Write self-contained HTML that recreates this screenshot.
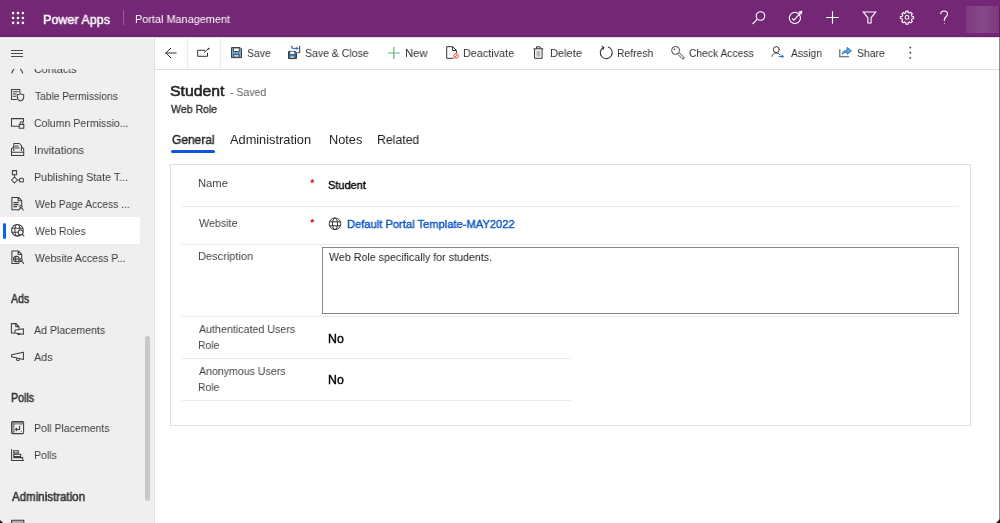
<!DOCTYPE html>
<html><head><meta charset="utf-8">
<style>
*{box-sizing:border-box;margin:0;padding:0}
html,body{width:1000px;height:523px;overflow:hidden;background:#fff;font-family:"Liberation Sans",sans-serif;color:#323130}
.a{position:absolute}
.t{position:absolute;white-space:nowrap;font-family:"Liberation Sans",sans-serif;will-change:transform}
svg{position:absolute;overflow:visible}
</style></head><body>
<!-- top bar -->
<div class="a" style="left:0;top:0;width:1000px;height:37px;background:#742774"></div>
<div class="a" style="left:0;top:36px;width:1000px;height:1px;background:#6a1f6a"></div>
<div class="a" style="left:0;top:37px;width:1000px;height:1px;background:#e9dde9"></div>
<!-- waffle -->
<svg style="left:0;top:0" width="40" height="37" fill="#fff"><circle cx="13.1" cy="13.1" r="1.3"/><circle cx="18" cy="13.1" r="1.3"/><circle cx="22.9" cy="13.1" r="1.3"/><circle cx="13.1" cy="18" r="1.3"/><circle cx="18" cy="18" r="1.3"/><circle cx="22.9" cy="18" r="1.3"/><circle cx="13.1" cy="22.9" r="1.3"/><circle cx="18" cy="22.9" r="1.3"/><circle cx="22.9" cy="22.9" r="1.3"/></svg>
<div class="a" style="left:123px;top:10px;width:1px;height:15px;background:#9a5c9a"></div>
<!-- top right icons -->
<svg style="left:0;top:0" width="1000" height="37" fill="none" stroke="#fff" stroke-width="1.1">
<circle cx="760.5" cy="16" r="4.3"/><path d="M757.4 19.2L752.6 24"/>
<circle cx="794.9" cy="18" r="5.6"/><path d="M792 18.3l1.9 1.9 6.6-7.4"/><path d="M802.6 10.6l-4.3 1.2 3.1 3.1z" fill="#fff" stroke="none"/>
<path d="M832.5 11.2v12.6M826.2 17.5h12.6"/>
<path d="M863.3 12h12.4l-4.6 5.8v5.2h-3.2v-5.2z"/>
<circle cx="907" cy="17.4" r="1.9"/>
<path d="M905.6 11.4l.3 1.6-1.3.6-1.1-1.1-1.6 1.3.8 1.4-.7 1.3-1.6.1v2l1.6.2.6 1.3-.9 1.3 1.5 1.5 1.3-.9 1.3.6.2 1.6h2l.2-1.6 1.3-.6 1.3.9 1.5-1.5-.9-1.3.6-1.3 1.6-.2v-2l-1.6-.2-.6-1.3.9-1.3-1.5-1.5-1.3.9-1.3-.6-.2-1.6z"/>
<path d="M940.7 14.2c0-2 1.5-3.2 3.4-3.2s3.4 1.2 3.4 3.1c0 2.6-3.2 2.8-3.2 5.8v1.2"/><circle cx="944.3" cy="23.4" r=".5" fill="#fff" stroke="none"/>
</svg>
<div class="a" style="left:966px;top:6px;width:34px;height:27px;background:linear-gradient(90deg,#7e3a7e,#87498a 50%,#7d377d)"></div>

<!-- sidebar -->
<div class="a" style="left:0;top:38px;width:154px;height:485px;background:#efefef;border-top:1px solid #f6f8f6"></div>
<div class="a" style="left:154px;top:38px;width:1px;height:485px;background:#e0e0e0"></div>
<div class="a" style="left:0;top:217px;width:140px;height:27px;background:#fff"></div>
<div class="a" style="left:3px;top:222.5px;width:3px;height:16px;border-radius:1.5px;background:#0a5efc"></div>
<div class="a" style="left:145px;top:336px;width:5px;height:165px;border-radius:3px;background:#c8c8c8"></div>
<!-- hamburger -->
<div class="a" style="left:11px;top:50.1px;width:12px;height:1.1px;background:#4a4a4a"></div>
<div class="a" style="left:11px;top:53.2px;width:12px;height:1.1px;background:#4a4a4a"></div>
<div class="a" style="left:11px;top:56.3px;width:12px;height:1.1px;background:#4a4a4a"></div>

<!-- toolbar -->
<div class="a" style="left:155px;top:69px;width:845px;height:1px;background:#e1dfdd"></div>
<div class="a" style="left:187px;top:37px;width:1px;height:32px;background:#edebe9"></div>
<div class="a" style="left:220px;top:37px;width:1px;height:32px;background:#edebe9"></div>

<!-- card -->
<div class="a" style="left:170px;top:164px;width:801px;height:262px;border:1px solid #e1dfdd"></div>
<div class="a" style="left:182px;top:206px;width:777px;height:1px;background:#edebe9"></div>
<div class="a" style="left:182px;top:244px;width:777px;height:1px;background:#edebe9"></div>
<div class="a" style="left:322px;top:247px;width:637px;height:67px;border:1px solid #8a8886"></div>
<div class="a" style="left:182px;top:316px;width:777px;height:1px;background:#edebe9"></div>
<div class="a" style="left:182px;top:358px;width:389px;height:1px;background:#edebe9"></div>
<div class="a" style="left:182px;top:400px;width:389px;height:1px;background:#edebe9"></div>
<!-- tab underline -->
<div class="a" style="left:171px;top:150px;width:43.5px;height:3px;border-radius:1.5px;background:#0b55e0"></div>
<!-- asterisks -->
<svg style="left:0;top:0" width="1" height="1" fill="#e0282e"><path transform="translate(312.3 181.2)" d="M0 -2.6L.75 -.9 2.5 -.85 1.2 .35 1.55 2.1 0 1.2 -1.55 2.1 -1.2 .35 -2.5 -.85 -.75 -.9z"/><path transform="translate(312.3 220.8)" d="M0 -2.6L.75 -.9 2.5 -.85 1.2 .35 1.55 2.1 0 1.2 -1.55 2.1 -1.2 .35 -2.5 -.85 -.75 -.9z"/></svg>
<!-- globe -->
<svg style="left:0;top:0" width="1" height="1" fill="none" stroke="#323130" stroke-width="1">
<circle cx="335" cy="223.8" r="5.8"/><ellipse cx="335" cy="223.8" rx="2.5" ry="5.8"/><path d="M329.7 221.8h10.6M329.7 225.8h10.6"/>
</svg>
<!-- right edge -->
<div class="a" style="left:999px;top:6px;width:1px;height:31px;background:#5f1f5f"></div>
<div class="a" style="left:999px;top:37px;width:1px;height:486px;background:#8c8c8c"></div>
<div class="a" style="left:996px;top:519px;width:4px;height:4px;background:#111;clip-path:polygon(100% 0,100% 100%,0 100%)"></div>

<div class="a" style="left:0;top:520px;width:3px;height:3px;background:#111;clip-path:polygon(0 0,100% 100%,0 100%)"></div>
<!-- toolbar icons -->
<svg style="left:0;top:0" width="1" height="1" fill="none" stroke="#323130" stroke-width="1" stroke-linecap="round" stroke-linejoin="round">
<path d="M165.8 53h10.4M170.8 48.2l-4.9 4.8 4.9 4.8"/>
<path d="M204.6 50.3h-6.9v6h9.8v-3.1M204.2 52.4l4.3-3.8"/><circle cx="208.7" cy="48.7" r=".9" fill="#323130" stroke="none"/>
</svg>
<!-- save floppy -->
<svg style="left:0;top:0" width="1" height="1">
<path d="M231.5 47.6h8.6l1.4 1.4v8.6h-10z" fill="#6fa8dc" stroke="#3d3d3d" stroke-width="1"/>
<rect x="233.6" y="48" width="5.6" height="3.4" fill="#fff" stroke="#323130" stroke-width=".8"/>
<rect x="233.8" y="54.2" width="5.2" height="3" fill="#b8d4ee" stroke="#323130" stroke-width=".8"/>
</svg>
<!-- save & close -->
<svg style="left:0;top:0" width="1" height="1">
<path d="M288.6 51.4h6.6l1.2 1.2v6h-7.8z" fill="#3d6a8e" stroke="#323130" stroke-width="1"/>
<rect x="290.3" y="51.6" width="4" height="2.4" fill="#fff"/>
<rect x="290.3" y="55.8" width="4" height="2.2" fill="#9bbbd6"/>
<path d="M292 48.5v-2h-.8M298.8 46.4h.9v6.3h-2.2" fill="none" stroke="#323130" stroke-width="1"/>
<path d="M292.3 48.4h5.4" stroke="#1b75d0" stroke-width="1.1" fill="none"/><path d="M296.4 46.6l2.2 1.8-2.2 1.8z" fill="#1b75d0"/>
</svg>
<!-- new plus -->
<svg style="left:0;top:0" width="1" height="1" fill="none" stroke="#5fb37c" stroke-width="1.2">
<path d="M393.8 47v12M387.8 53h12"/>
</svg>
<!-- deactivate -->
<svg style="left:0;top:0" width="1" height="1" fill="none" stroke="#323130" stroke-width="1" stroke-linejoin="round">
<path d="M453.5 58.3h-6.8v-11.6h6l3.7 3.7v2.8M452.6 46.8v3.7h3.7"/>
<circle cx="456.1" cy="55.9" r="2.3" fill="#fff" stroke="#e8434a" stroke-width="1"/><path d="M454.6 57.4l3-3" stroke="#e8434a" stroke-width=".9"/>
</svg>
<!-- delete trash -->
<svg style="left:0;top:0" width="1" height="1" fill="none" stroke="#323130" stroke-width="1" stroke-linejoin="round">
<path d="M533.5 48.8h9.7M536.5 48.6v-1.8h3.7v1.8M534.6 49v9.3h7.5V49"/>
<rect x="536.4" y="50.8" width="3.9" height="5.8" fill="#b8b8b8" stroke="none"/>
</svg>
<!-- refresh -->
<svg style="left:0;top:0" width="1" height="1" fill="none" stroke="#323130" stroke-width="1.05" stroke-linecap="round">
<path d="M603.2 47.5A6 6 0 1 0 608.5 47.1"/><path d="M602 46.4l1.8 1.1-.7 1.9"/>
</svg>
<!-- key -->
<svg style="left:0;top:0" width="1" height="1" fill="none" stroke="#323130" stroke-width="1" stroke-linejoin="round">
<path d="M677.9 54.4l4.4 4.4a1 1 0 0 0 1.5-1.5l-4.4-4.4" stroke="#444"/><circle cx="675.6" cy="50.4" r="4" stroke="#444"/>
<circle cx="674.5" cy="49.2" r=".75" fill="#222" stroke="none"/>
</svg>
<!-- assign -->
<svg style="left:0;top:0" width="1" height="1" fill="none" stroke="#3a3a3a" stroke-width="1" stroke-linecap="round">
<circle cx="776.3" cy="49.6" r="3"/><path d="M771.9 56.3c.7-1.6 1.5-2.7 2.7-3.2h3.4c.6.3 1.1.7 1.5 1.3"/>
<path d="M779.4 56.4h3" stroke="#1b75d0" stroke-width="1.2"/><path d="M781.8 54.5l2.3 1.9-2.3 1.9z" fill="#1b75d0" stroke="none"/>
</svg>
<!-- share -->
<svg style="left:0;top:0" width="1" height="1" fill="none" stroke="#555" stroke-width="1.1" stroke-linejoin="round">
<path d="M839.8 49.2v7.6h8.6v-.6"/>
<path d="M842.1 54.3c.5-2.5 2.3-3.9 5.1-4v-2.9l4.2 3.4-4.2 3.4v-1.9c-2.2 0-3.8.6-5.1 2z" fill="#6aaae6" stroke="#1b6ac0" stroke-width=".9"/>
</svg>
<!-- more -->
<svg style="left:0;top:0" width="1" height="1" fill="#323130">
<circle cx="910.3" cy="47.6" r=".9"/><circle cx="910.3" cy="52.7" r=".9"/><circle cx="910.3" cy="57.8" r=".9"/>
</svg>

<!-- sidebar icons -->
<svg style="left:0;top:0" width="1" height="1" fill="none" stroke="#3e3e3e" stroke-width="1.05" stroke-linejoin="round" stroke-linecap="round">
<!-- contacts partial -->
<path d="M11.8 73c.6-1.8 1.2-2.8 2-3.6M22.6 73c-.6-1.8-1.2-2.8-2-3.6"/>
<!-- table permissions -->
<path d="M16.4 99.5h-4.9v-10h8.4v3"/><path d="M13.2 91.8h5M13.2 94h3M13.2 96.2h2.6"/>
<path d="M20.5 93.6c1.2.9 2.2 1.1 3.2 1.1v2.8c0 1.7-1.2 2.8-3.2 3.4-2-.6-3.2-1.7-3.2-3.4v-2.8c1 0 2-.2 3.2-1.1z"/>
<!-- column permissions -->
<path d="M18.5 126.2h-7v-7.6h12v3.2"/><rect x="19.2" y="124.4" width="4.6" height="3.9"/><path d="M20.1 124.4v-1.2a1.4 1.4 0 0 1 2.8 0v1.2"/>
<!-- invitations -->
<path d="M11.5 148.8v6.7h12.2v-6.7l-2.3-2.1M11.5 148.8l2.3-2.1M11.6 152.2h12"/><path d="M13.8 150.5v-7h5.6l2 2v5" /><path d="M15.2 146h3M15.2 148h4"/>
<!-- publishing state -->
<rect x="12.4" y="170.6" width="4.2" height="4.2"/><path d="M14.5 174.8v2.2M14.5 177l3 3-3 3-3-3z M17.5 180h2"/><rect x="19.6" y="178.2" width="3.8" height="3.8" rx="1"/>
<!-- web page access -->
<path d="M18.5 209.8h-6.6v-12.4h6.6l3.2 3.2v4.5M18.1 197.6v3.2h3.3"/><path d="M13.8 202.6h4.5M13.8 204.6h4.5M13.8 206.6h3"/>
<path d="M18.8 210.2c.3-1.4 1.1-2.1 2.2-2.1s1.9.7 2.2 2.1"/><circle cx="21" cy="206.4" r="1.2"/>
<!-- web roles globe + search -->
<circle cx="17.4" cy="230.2" r="5.8"/><ellipse cx="17.4" cy="230.2" rx="2.5" ry="5.8"/><path d="M12 228.2h10.8M12 232.2h6.5"/>
<circle cx="20.6" cy="232.4" r="2.4" fill="#fff"/><path d="M22.3 234.2l1.6 1.8"/>
<!-- website access -->
<path d="M18.4 263.4h-6.5v-12.3h6.6l3.2 3.2v4.3M18.1 251.2v3.2h3.3"/><circle cx="16.3" cy="259" r="2.8"/><path d="M13.5 259h5.6M16.3 256.2c-1 1-1 4.6 0 5.6"/>
<path d="M18.6 263.6c.3-1.6 1.2-2.4 2.4-2.4s2.1.8 2.4 2.4"/><circle cx="21" cy="259.8" r="1.2"/>
<!-- ad placements -->
<path d="M14.4 333h-3v-9.4h4.6l3 3v1.8M15.8 323.7v2.9h2.8"/><path d="M15 330.3l8.4-1.6v5.6l-8.4-1.4z M18 333.3l-.2 1.3h2l.2-1"/>
<!-- ads megaphone -->
<path d="M11.6 354.8l11.8-2.6v7.2l-11.8-2.6z M16.6 358.4v.8a1.4 1.4 0 0 0 2.8 0v-.3"/>
<!-- poll placements -->
<path d="M12 422h11.2v2.6h-8.6v8.6H12z" fill="#9a9a9a" stroke="none"/><rect x="11.6" y="421.6" width="12" height="12" rx="1"/><path d="M14 424v.1M21.2 424v.1M14 431.2v.1M21.2 431.2v.1"/><path d="M19.6 426v3.4h-4M16.8 428.2l-1.3 1.2 1.3 1.2"/>
<!-- polls -->
<path d="M11.6 449.6v10.8h12M13.7 450.8h4.6v2.2h-4.6zM13.7 454.2h7v2.2h-7zM13.7 457.6h9v1.8"/>
<!-- bottom partial -->
<rect x="12" y="520.5" width="11.4" height="3" fill="#b0b0b0" stroke="none"/><path d="M11.6 523.5v-3.2h12.2v3.2"/>
</svg>

<div class="t" id="t0" style="left:43.00px;top:14.16px;font-size:12.75px;line-height:12.75px;color:#fff;transform:scaleX(0.9851);transform-origin:0 0;-webkit-text-stroke:0.45px currentColor">Power Apps</div>
<div class="t" id="t1" style="left:135.00px;top:13.50px;font-size:11.3px;line-height:11.3px;color:#fff;transform:scaleX(0.9629);transform-origin:0 0">Portal Management</div>
<div class="t" id="t2" style="left:247.00px;top:48.15px;font-size:11.59px;line-height:11.59px;color:#333333;transform:scaleX(0.8961);transform-origin:0 0">Save</div>
<div class="t" id="t3" style="left:305.00px;top:48.15px;font-size:11.59px;line-height:11.59px;color:#333333;transform:scaleX(0.9073);transform-origin:0 0">Save &amp; Close</div>
<div class="t" id="t4" style="left:405.00px;top:48.15px;font-size:11.59px;line-height:11.59px;color:#333333;transform:scaleX(0.9735);transform-origin:0 0">New</div>
<div class="t" id="t5" style="left:463.00px;top:48.15px;font-size:11.59px;line-height:11.59px;color:#333333;transform:scaleX(0.9359);transform-origin:0 0">Deactivate</div>
<div class="t" id="t6" style="left:549.50px;top:48.15px;font-size:11.59px;line-height:11.59px;color:#333333;transform:scaleX(0.9566);transform-origin:0 0">Delete</div>
<div class="t" id="t7" style="left:617.00px;top:48.15px;font-size:11.59px;line-height:11.59px;color:#333333;transform:scaleX(0.8974);transform-origin:0 0">Refresh</div>
<div class="t" id="t8" style="left:688.50px;top:48.15px;font-size:11.59px;line-height:11.59px;color:#333333;transform:scaleX(0.8874);transform-origin:0 0">Check Access</div>
<div class="t" id="t9" style="left:790.50px;top:48.15px;font-size:11.59px;line-height:11.59px;color:#333333;transform:scaleX(0.8945);transform-origin:0 0">Assign</div>
<div class="t" id="t10" style="left:857.00px;top:48.15px;font-size:11.59px;line-height:11.59px;color:#333333;transform:scaleX(0.8966);transform-origin:0 0">Share</div>
<div class="t" id="t11" style="left:34.00px;top:63.85px;font-size:11.59px;line-height:11.59px;color:#3c3c3c;transform:scaleX(0.9318);transform-origin:0 0;clip-path:inset(5.35px 0 0 0)">Contacts</div>
<div class="t" id="t12" style="left:35.00px;top:90.85px;font-size:11.59px;line-height:11.59px;color:#3c3c3c;transform:scaleX(0.8809);transform-origin:0 0">Table Permissions</div>
<div class="t" id="t13" style="left:34.00px;top:117.95px;font-size:11.59px;line-height:11.59px;color:#3c3c3c;transform:scaleX(0.9129);transform-origin:0 0">Column Permissio...</div>
<div class="t" id="t14" style="left:34.00px;top:144.95px;font-size:11.59px;line-height:11.59px;color:#3c3c3c;transform:scaleX(0.9608);transform-origin:0 0">Invitations</div>
<div class="t" id="t15" style="left:34.00px;top:171.95px;font-size:11.59px;line-height:11.59px;color:#3c3c3c;transform:scaleX(0.9200);transform-origin:0 0">Publishing State T...</div>
<div class="t" id="t16" style="left:35.00px;top:198.95px;font-size:11.59px;line-height:11.59px;color:#3c3c3c;transform:scaleX(0.8887);transform-origin:0 0">Web Page Access ...</div>
<div class="t" id="t17" style="left:35.00px;top:225.95px;font-size:11.59px;line-height:11.59px;color:#3c3c3c;transform:scaleX(0.8966);transform-origin:0 0">Web Roles</div>
<div class="t" id="t18" style="left:35.00px;top:252.95px;font-size:11.59px;line-height:11.59px;color:#3c3c3c;transform:scaleX(0.9000);transform-origin:0 0">Website Access P...</div>
<div class="t" id="t19" style="left:34.00px;top:325.15px;font-size:11.59px;line-height:11.59px;color:#3c3c3c;transform:scaleX(0.9144);transform-origin:0 0">Ad Placements</div>
<div class="t" id="t20" style="left:34.00px;top:352.15px;font-size:11.59px;line-height:11.59px;color:#3c3c3c;transform:scaleX(0.9319);transform-origin:0 0">Ads</div>
<div class="t" id="t21" style="left:34.00px;top:423.35px;font-size:11.59px;line-height:11.59px;color:#3c3c3c;transform:scaleX(0.9099);transform-origin:0 0">Poll Placements</div>
<div class="t" id="t22" style="left:34.00px;top:450.35px;font-size:11.59px;line-height:11.59px;color:#3c3c3c;transform:scaleX(0.9088);transform-origin:0 0">Polls</div>
<div class="t" id="t23" style="left:11.00px;top:294.30px;font-size:11.88px;line-height:11.88px;color:#323130;transform:scaleX(0.8912);transform-origin:0 0;-webkit-text-stroke:0.5px currentColor">Ads</div>
<div class="t" id="t24" style="left:11.00px;top:392.70px;font-size:11.88px;line-height:11.88px;color:#323130;transform:scaleX(0.8975);transform-origin:0 0;-webkit-text-stroke:0.5px currentColor">Polls</div>
<div class="t" id="t25" style="left:11.50px;top:492.40px;font-size:11.88px;line-height:11.88px;color:#323130;transform:scaleX(0.9707);transform-origin:0 0;-webkit-text-stroke:0.5px currentColor">Administration</div>
<div class="t" id="t26" style="left:170.00px;top:83.16px;font-size:15.22px;line-height:15.22px;color:#201f1e;transform:scaleX(1.0381);transform-origin:0 0;-webkit-text-stroke:0.55px currentColor">Student</div>
<div class="t" id="t27" style="left:229.50px;top:87.01px;font-size:11.16px;line-height:11.16px;color:#605e5c;transform:scaleX(0.9408);transform-origin:0 0">- Saved</div>
<div class="t" id="t28" style="left:171.00px;top:104.09px;font-size:11.3px;line-height:11.3px;color:#323130;transform:scaleX(0.9349);transform-origin:0 0;-webkit-text-stroke:0.4px currentColor">Web Role</div>
<div class="t" id="t29" style="left:171.50px;top:133.76px;font-size:12.75px;line-height:12.75px;color:#201f1e;transform:scaleX(0.9380);transform-origin:0 0;-webkit-text-stroke:0.4px currentColor">General</div>
<div class="t" id="t30" style="left:229.50px;top:133.96px;font-size:12.75px;line-height:12.75px;color:#201f1e;transform:scaleX(1.0026);transform-origin:0 0">Administration</div>
<div class="t" id="t31" style="left:329.00px;top:133.96px;font-size:12.75px;line-height:12.75px;color:#201f1e;transform:scaleX(0.9941);transform-origin:0 0">Notes</div>
<div class="t" id="t32" style="left:377.00px;top:133.96px;font-size:12.75px;line-height:12.75px;color:#201f1e;transform:scaleX(0.9619);transform-origin:0 0">Related</div>
<div class="t" id="t33" style="left:198.00px;top:178.04px;font-size:11.01px;line-height:11.01px;color:#444444;transform:scaleX(1.0219);transform-origin:0 0">Name</div>
<div class="t" id="t34" style="left:328.00px;top:179.55px;font-size:11.59px;line-height:11.59px;color:#000;transform:scaleX(0.9487);transform-origin:0 0;-webkit-text-stroke:0.4px currentColor">Student</div>
<div class="t" id="t35" style="left:199.00px;top:218.24px;font-size:11.01px;line-height:11.01px;color:#444444;transform:scaleX(0.9744);transform-origin:0 0">Website</div>
<div class="t" id="t36" style="left:346.50px;top:218.32px;font-size:11.74px;line-height:11.74px;color:#0b53c1;transform:scaleX(0.9509);transform-origin:0 0;-webkit-text-stroke:0.4px currentColor">Default Portal Template-MAY2022</div>
<div class="t" id="t37" style="left:198.00px;top:250.55px;font-size:11.59px;line-height:11.59px;color:#444444;transform:scaleX(0.9537);transform-origin:0 0">Description</div>
<div class="t" id="t38" style="left:329.00px;top:250.62px;font-size:11.74px;line-height:11.74px;color:#201f1e;transform:scaleX(0.9101);transform-origin:0 0">Web Role specifically for students.</div>
<div class="t" id="t39" style="left:198.50px;top:323.02px;font-size:11.74px;line-height:11.74px;color:#444444;transform:scaleX(0.9105);transform-origin:0 0">Authenticated Users</div>
<div class="t" id="t40" style="left:197.50px;top:340.15px;font-size:11.59px;line-height:11.59px;color:#444444;transform:scaleX(0.9010);transform-origin:0 0">Role</div>
<div class="t" id="t41" style="left:328.00px;top:332.83px;font-size:12.32px;line-height:12.32px;color:#000;transform:scaleX(0.9750);transform-origin:0 0;-webkit-text-stroke:0.4px currentColor">No</div>
<div class="t" id="t42" style="left:198.50px;top:365.85px;font-size:11.59px;line-height:11.59px;color:#444444;transform:scaleX(0.9149);transform-origin:0 0">Anonymous Users</div>
<div class="t" id="t43" style="left:197.50px;top:381.85px;font-size:11.59px;line-height:11.59px;color:#444444;transform:scaleX(0.9010);transform-origin:0 0">Role</div>
<div class="t" id="t44" style="left:328.00px;top:374.03px;font-size:12.32px;line-height:12.32px;color:#000;transform:scaleX(0.9750);transform-origin:0 0;-webkit-text-stroke:0.4px currentColor">No</div>
</body></html>
